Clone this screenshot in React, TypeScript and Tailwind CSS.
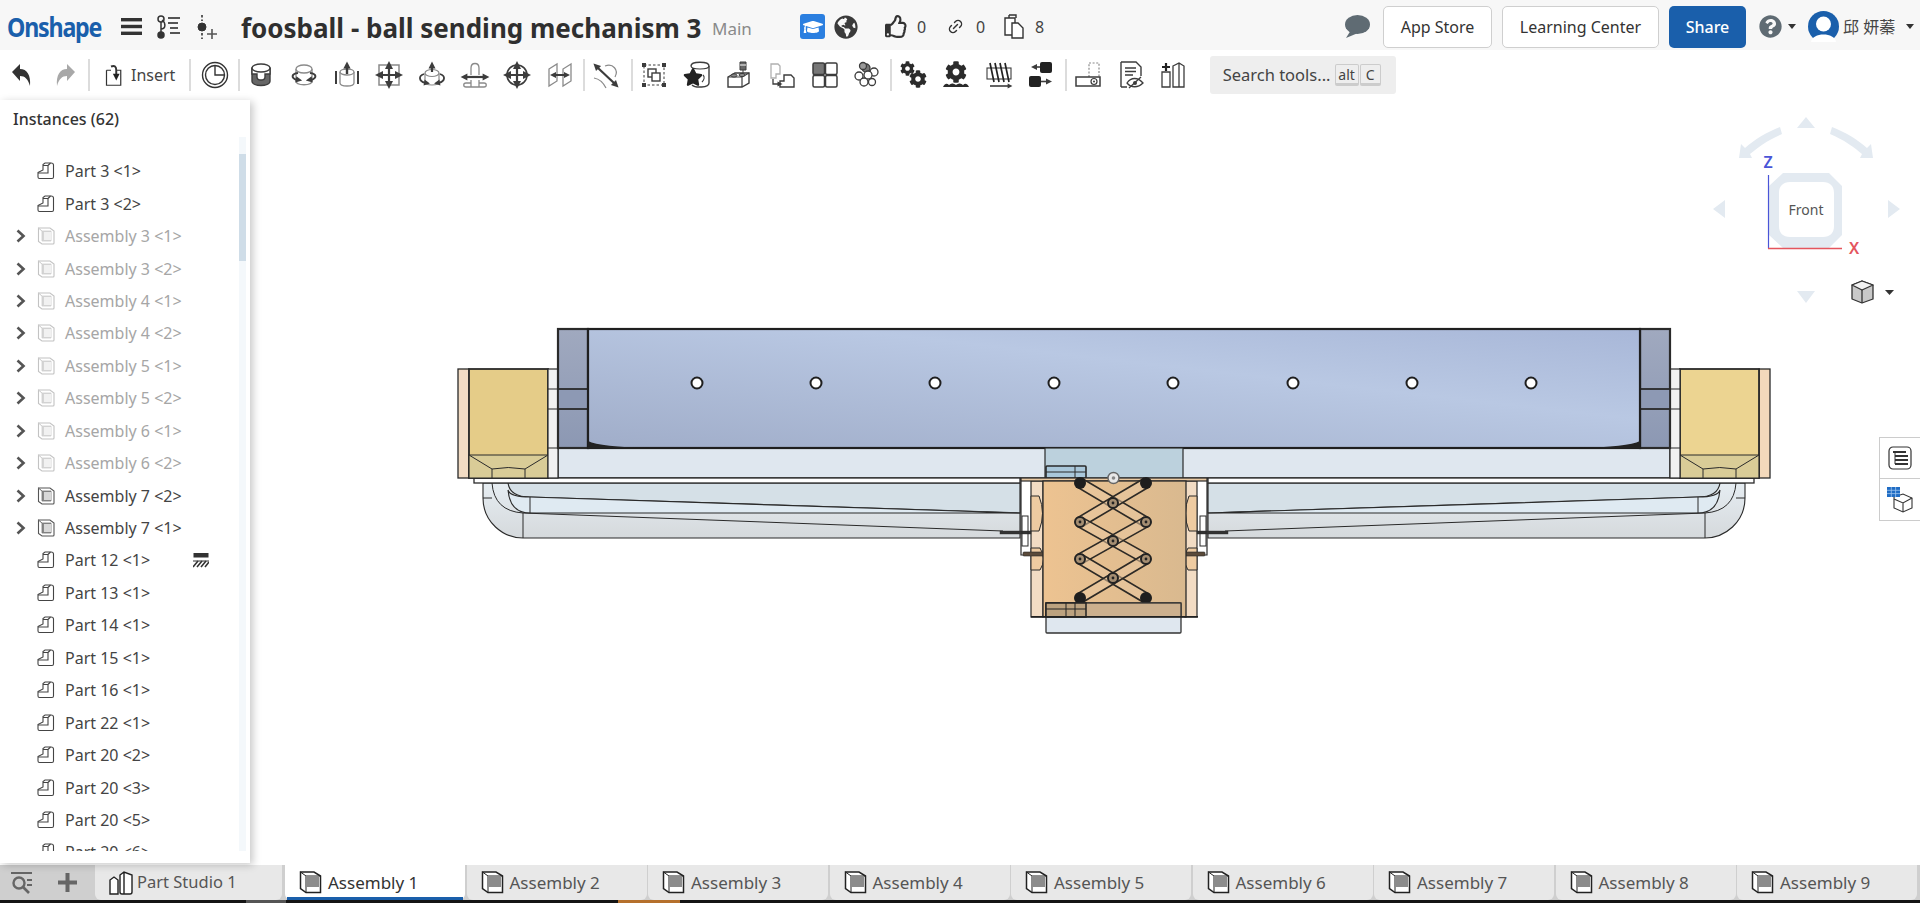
import React from 'react';
import { FaCog, FaGlobeAmericas, FaGraduationCap, FaQuestionCircle, FaRegThumbsUp, FaStar } from 'react-icons/fa';
import { Link2 } from 'lucide-react';

const FONT = "font-['Noto_Sans','Noto_Sans_CJK_TC',sans-serif]";
const INK = '#3c3c3c';
const MID = '#8a8a8a';

// small filled arrow, pointing to (x, y) along a direction in degrees (0 = right)
const Head = ({ x, y, a, s = 4, c = INK }: { x: number; y: number; a: number; s?: number; c?: string }) => (
  <path d={`M${s} 0 L${-s} ${-s} L${-s} ${s} Z`} fill={c} stroke="none" transform={`translate(${x} ${y}) rotate(${a})`} />
);

const Cylinder = ({ c = MID }: { c?: string }) => (
  <g stroke={c} strokeWidth="1.3" fill="white">
    <path d="M7 9 V21 C7 26 23 26 23 21 V9" />
    <ellipse cx="15" cy="9" rx="8" ry="4" />
  </g>
);

const Cross = () => (
  <g stroke={INK} strokeWidth="2.2">
    <path d="M15 6 V24 M6 15 H24" />
    <Head x={15} y={5} a={-90} />
    <Head x={15} y={25} a={90} />
    <Head x={5} y={15} a={180} />
    <Head x={25} y={15} a={0} />
  </g>
);

const toolIcons: Record<string, React.ReactNode> = {
  fasten: (
    <g stroke={INK} strokeWidth="1.4">
      <path d="M6 8 V21 C6 27 24 27 24 21 V8" fill="#666" />
      <path d="M6 8 V14 H11 V17 C11 21 19 21 19 17 V14 H24 V8 Z" fill="white" />
      <ellipse cx="15" cy="8" rx="9" ry="4" fill="white" />
    </g>
  ),
  revolute: (
    <g>
      <Cylinder />
      <g stroke={INK} strokeWidth="2" fill="none">
        <path d="M9 13 C2 14 2 18 8 20" />
        <path d="M21 13 C28 14 28 18 22 20" />
      </g>
      <Head x={10} y={20} a={10} s={3.2} />
      <Head x={20} y={20} a={170} s={3.2} />
    </g>
  ),
  slider: (
    <g>
      <g stroke={MID} strokeWidth="1.3" fill="white">
        <path d="M8 12 V23 C8 27 22 27 22 23 V12" />
        <ellipse cx="15" cy="12" rx="7" ry="3" />
      </g>
      <path d="M4 11 V24 M26 11 V24" stroke={INK} strokeWidth="2" />
      <path d="M15 14 V7" stroke={INK} strokeWidth="2.4" />
      <Head x={15} y={5} a={-90} s={3.6} />
    </g>
  ),
  planar: (
    <g>
      <rect x="5" y="5" width="20" height="20" fill="white" stroke={MID} strokeWidth="1.5" />
      <Cross />
    </g>
  ),
  cylindrical: (
    <g>
      <g stroke={MID} strokeWidth="1.2" fill="white">
        <path d="M8 13 V22 C8 26 22 26 22 22 V13" />
        <ellipse cx="15" cy="13" rx="7" ry="3.5" />
      </g>
      <path d="M15 12 V7" stroke={INK} strokeWidth="2.2" />
      <Head x={15} y={5} a={-90} s={3.5} />
      <g stroke={INK} strokeWidth="1.8" fill="none">
        <path d="M7 14 C1 16 2 21 8 23" />
        <path d="M23 14 C29 16 28 21 22 23" />
      </g>
      <Head x={10} y={23} a={10} s={3} />
      <Head x={20} y={23} a={170} s={3} />
    </g>
  ),
  pin: (
    <g>
      <path d="M11 15 V8 C11 2 19 2 19 8 V15 M11 20 V23 H6 C3 23 3 27 6 27 H24 C27 27 27 23 24 23 H19 V20 M11 27 V23 M19 27 V23" fill="white" stroke={MID} strokeWidth="1.3" />
      <path d="M6 17 H24" stroke={INK} strokeWidth="2.2" />
      <Head x={4} y={17} a={180} s={3.4} />
      <Head x={26} y={17} a={0} s={3.4} />
    </g>
  ),
  ball: (
    <g>
      <circle cx="15" cy="15" r="10" fill="white" stroke={INK} strokeWidth="1.6" />
      <Cross />
    </g>
  ),
  parallel: (
    <g>
      <path d="M4 9 L12 4 V21 L4 26 Z M26 4 L18 9 V26 L26 21 Z" fill="white" stroke={MID} strokeWidth="1.3" />
      <path d="M8 15 H22" stroke={INK} strokeWidth="2" />
      <Head x={8} y={15} a={180} s={3} />
      <Head x={22} y={15} a={0} s={3} />
    </g>
  ),
  tangent: (
    <g>
      <path d="M3 18 C9 19 13 24 15 28 M14 6 C22 3 28 10 24 17" fill="none" stroke={MID} strokeWidth="1.2" />
      <path d="M7 8 L23 23" stroke={INK} strokeWidth="2.2" />
      <Head x={5} y={6} a={-135} s={3.6} />
      <Head x={25} y={25} a={45} s={3.6} />
    </g>
  ),
  group: (
    <g>
      <rect x="5" y="5" width="20" height="20" fill="none" stroke={INK} strokeWidth="1" strokeDasharray="2.5 2" />
      <g fill={INK}>
        <rect x="3" y="3" width="4" height="4" />
        <rect x="23" y="3" width="4" height="4" />
        <rect x="3" y="23" width="4" height="4" />
        <rect x="23" y="23" width="4" height="4" />
      </g>
      <rect x="9" y="9" width="8" height="8" fill="white" stroke={INK} strokeWidth="1.4" />
      <rect x="13" y="13" width="8" height="8" fill="white" stroke={INK} strokeWidth="1.4" />
    </g>
  ),
  star: (
    <g>
      <path d="M9 6 C9 1 27 1 27 6 V23 C27 28 13 28 10 25" fill="white" stroke={INK} strokeWidth="1.4" />
      <path d="M9 6 C9 10 27 10 27 6" fill="none" stroke={INK} strokeWidth="1.2" />
      <FaStar x={1} y={7} size={20} color="#222" />
      <path d="M20 22 C22 20 23 17 21 15" stroke={INK} fill="none" strokeWidth="1.2" />
    </g>
  ),
  bolted: (
    <g>
      <path d="M4 17 L11 13 H25 V23 L18 27 H4 Z" fill="white" stroke={INK} strokeWidth="1.4" />
      <path d="M4 17 H18 V27 M18 17 L25 13" fill="none" stroke={INK} strokeWidth="1.2" />
      <ellipse cx="10" cy="15.5" rx="3" ry="1.6" fill="#888" stroke={INK} />
      <ellipse cx="18" cy="15" rx="3" ry="1.6" fill="#888" stroke={INK} />
      <path d="M16 2 H22 V10 H16 Z" fill="#666" stroke={INK} />
      <path d="M16 5 H22" stroke="white" />
      <path d="M19 10 V13" stroke={INK} />
    </g>
  ),
  parts: (
    <g fill="white">
      <path d="M4 4 H11 L13 6 V14 H9 V18 H4 Z" stroke="#b0b0b0" strokeWidth="1.3" />
      <path d="M17 15 H24 L27 18 V27 H13 V21 H17 Z" stroke={INK} strokeWidth="1.4" />
      <path d="M6 19 V24 H11" fill="none" stroke={INK} strokeWidth="1.3" />
      <Head x={13} y={24} a={0} s={2.5} />
    </g>
  ),
  pattern: (
    <g stroke={INK} strokeWidth="1.5">
      <rect x="3" y="3" width="11.5" height="11.5" rx="1.5" fill="#777" />
      <rect x="15.5" y="3" width="11.5" height="11.5" rx="1.5" fill="white" />
      <rect x="3" y="15.5" width="11.5" height="11.5" rx="1.5" fill="white" />
      <rect x="15.5" y="15.5" width="11.5" height="11.5" rx="1.5" fill="white" />
    </g>
  ),
  rings: (
    <g fill="white" stroke={INK} strokeWidth="1.3">
      <circle cx="14" cy="8" r="4" fill="#777" />
      <circle cx="11" cy="6" r="3.5" fill="#999" />
      <circle cx="22" cy="12" r="4" />
      <circle cx="16" cy="15" r="4" />
      <circle cx="7" cy="16" r="4" />
      <circle cx="12" cy="22" r="4" />
      <circle cx="20" cy="22" r="3.5" />
    </g>
  ),
  gears: (
    <g>
      <FaCog x={2} y={1} size={15} color="#2b2b2b" />
      <FaCog x={11} y={10} size={18} color="#2b2b2b" />
    </g>
  ),
  rack: (
    <g>
      <FaCog x={4} y={1} size={22} color="#2b2b2b" />
      <path d="M2 27 C4 23 6 23 8 25 C10 23 12 23 15 25 C18 23 20 23 22 25 C24 23 26 23 28 27 Z" fill="#2b2b2b" />
    </g>
  ),
  screw: (
    <g>
      <rect x="3" y="8" width="24" height="11" fill="white" stroke={INK} strokeWidth="1.1" />
      <path d="M6 3 L10 22 M11 3 L15 22 M16 3 L20 22 M21 3 L25 22" stroke="#222" strokeWidth="1.7" />
      <path d="M6 26 H24" stroke={INK} strokeWidth="1.6" />
      <Head x={26} y={26} a={0} s={2.4} />
    </g>
  ),
  linear: (
    <g>
      <rect x="14" y="2" width="12" height="11" rx="2" fill="#222" />
      <path d="M9 7 H14" stroke={INK} strokeWidth="1.6" />
      <Head x={8} y={7} a={180} s={3} />
      <rect x="3" y="16" width="12" height="11" rx="2" fill="#222" />
      <path d="M15 21.5 H21" stroke={INK} strokeWidth="1.6" />
      <Head x={23} y={21.5} a={0} s={3} />
    </g>
  ),
  limits: (
    <g>
      <rect x="16" y="3" width="10" height="15" fill="white" stroke={MID} strokeWidth="1.2" strokeDasharray="2 1.6" />
      <rect x="3" y="17" width="24" height="9" fill="white" stroke={INK} strokeWidth="1.5" />
      <circle cx="21" cy="21.5" r="3" fill="white" stroke={INK} strokeWidth="1.2" />
      <circle cx="21" cy="21.5" r="1" fill={INK} />
    </g>
  ),
  hide: (
    <g>
      <path d="M5 2 H20 L25 7 V16 M11 27 H5 Z M5 2 V27" fill="white" stroke={INK} strokeWidth="1.4" />
      <path d="M9 8 H20 M9 11.5 H20 M9 15 H17" stroke={INK} strokeWidth="1.5" />
      <path d="M11 23 C15 17 22 17 27 23 C22 28 15 28 11 23 Z" fill="white" stroke={INK} strokeWidth="1.3" />
      <circle cx="19" cy="23" r="2" fill={INK} />
      <path d="M13 28 L25 17" stroke={INK} strokeWidth="1.3" />
    </g>
  ),
  replicate: (
    <g fill="white">
      <path d="M4 12 H12 V27 H4 Z" stroke={INK} strokeWidth="1.3" />
      <path d="M15 6 L21 3 L26 6 V27 H15 Z M21 3 V27" stroke={INK} strokeWidth="1.3" />
      <path d="M8 3 V11 M4 7 H12" stroke="#222" strokeWidth="2.2" />
    </g>
  ),
};

const Tool = ({ name }: { name: string }) => (
  <div className="w-[42.7px] h-[50px] shrink-0 flex items-center justify-center">
    <svg width="30" height="30" viewBox="0 0 30 30" fill="none">
      {toolIcons[name]}
    </svg>
  </div>
);

const Divider = ({ className = '' }: { className?: string }) => <div className={`w-[2px] h-[32px] shrink-0 bg-[#dcdcdc] ${className}`} />;

const Caret = () => (
  <svg width="8" height="5" viewBox="0 0 8 5" className="shrink-0">
    <path d="M0 0 H8 L4 5 Z" fill="#333" />
  </svg>
);

const PartIcon = () => (
  <svg width="18" height="18" viewBox="0 0 18 18" fill="none" stroke="#444" strokeWidth="1.1" className="shrink-0">
    <path d="M1 10.5 L6 8 V2.5 L8 1 H14 Q16.5 1 16.5 3 V15 Q16.5 16.5 15 16.5 H2.5 Q1 16.5 1 15 Z" />
    <path d="M1 11 H11 V3.5 M6 3.5 H11 M11 3.5 L13.5 1" />
  </svg>
);

const AsmIcon = ({ dim }: { dim: boolean }) => (
  <svg width="18" height="18" viewBox="0 0 18 18" className="shrink-0" opacity={dim ? 0.35 : 1}>
    <path d="M1.5 1 H13 L17 4 V16 Q17 17 16 17 H5 L1.5 14.5 Z" fill="white" stroke="#555" strokeWidth="1.1" />
    <path d="M1.5 1 L5 4 H14 V14 H5 V4 Z" fill="#888" stroke="#777" strokeWidth="0.8" />
    <rect x="7" y="5" width="7" height="8" fill="#d8d8d8" />
  </svg>
);

type Row = { label: string; kind: 'part' | 'asm'; dim?: boolean };

const rows: Row[] = [
  { label: 'Part 3 <1>', kind: 'part' },
  { label: 'Part 3 <2>', kind: 'part' },
  { label: 'Assembly 3 <1>', kind: 'asm', dim: true },
  { label: 'Assembly 3 <2>', kind: 'asm', dim: true },
  { label: 'Assembly 4 <1>', kind: 'asm', dim: true },
  { label: 'Assembly 4 <2>', kind: 'asm', dim: true },
  { label: 'Assembly 5 <1>', kind: 'asm', dim: true },
  { label: 'Assembly 5 <2>', kind: 'asm', dim: true },
  { label: 'Assembly 6 <1>', kind: 'asm', dim: true },
  { label: 'Assembly 6 <2>', kind: 'asm', dim: true },
  { label: 'Assembly 7 <2>', kind: 'asm' },
  { label: 'Assembly 7 <1>', kind: 'asm' },
  { label: 'Part 12 <1>', kind: 'part' },
  { label: 'Part 13 <1>', kind: 'part' },
  { label: 'Part 14 <1>', kind: 'part' },
  { label: 'Part 15 <1>', kind: 'part' },
  { label: 'Part 16 <1>', kind: 'part' },
  { label: 'Part 22 <1>', kind: 'part' },
  { label: 'Part 20 <2>', kind: 'part' },
  { label: 'Part 20 <3>', kind: 'part' },
  { label: 'Part 20 <5>', kind: 'part' },
  { label: 'Part 20 <6>', kind: 'part' },
];

const Sidebar = () => (
  <aside className="w-[250px] h-[763px] shrink-0 bg-white shadow-[3px_2px_8px_rgba(0,0,0,0.22)] z-10 flex flex-col">
    <div className="h-[37px] pl-[13px] flex items-center text-[16px] font-medium text-[#333]">Instances (62)</div>
    <div className="h-[714px] flex overflow-hidden">
      <div className="w-[239px] pt-[18px] overflow-hidden">
        {rows.map((row) => (
          <div key={row.label} className="h-[32.45px] flex items-center relative">
            <div className="w-[37px] pl-[16px] shrink-0">
              {row.kind === 'asm' && (
                <svg width="10" height="14" viewBox="0 0 10 14" fill="none" stroke="#555" strokeWidth="2.6">
                  <path d="M1.5 1.5 L7.5 7 L1.5 12.5" />
                </svg>
              )}
            </div>
            {row.kind === 'part' ? <PartIcon /> : <AsmIcon dim={!!row.dim} />}
            <span className={`ml-[10px] text-[16px] whitespace-nowrap ${row.dim ? 'text-[#a6a6a6]' : 'text-[#444]'}`}>{row.label}</span>
            {row.label === 'Part 12 <1>' && (
              <svg width="16" height="15" viewBox="0 0 16 15" className="ml-auto mr-[30px]" stroke="#333">
                <rect x="0.5" y="0" width="15" height="4.5" fill="#333" stroke="none" />
                <path d="M0 14 L5 8 M4 14 L9 8 M8 14 L13 8 M12 14 L16 9" strokeWidth="1.6" />
                <path d="M0 8 H16" strokeWidth="1" />
              </svg>
            )}
          </div>
        ))}
      </div>
      <div className="w-[7px] h-full bg-[#f4f8fb]">
        <div className="mt-[17px] h-[107px] bg-[#cfdde8]" />
      </div>
    </div>
  </aside>
);

const Bar = ({ x1, y1, x2, y2 }: { x1: number; y1: number; x2: number; y2: number }) => {
  const len = Math.hypot(x2 - x1, y2 - y1);
  const nx = ((y2 - y1) / len) * 5;
  const ny = ((x1 - x2) / len) * 5;
  return (
    <path
      d={`M${x1 + nx} ${y1 + ny} L${x2 + nx} ${y2 + ny} L${x2 - nx} ${y2 - ny} L${x1 - nx} ${y1 - ny} Z`}
      fill="#e9c9a2"
      fillOpacity="0.55"
      stroke="#2d2a26"
      strokeWidth="1.6"
    />
  );
};

// left half of everything that is mirrored around x = 1114
const Half = ({ yellow, peach }: { yellow: string; peach: string }) => (
  <g stroke="#2a2a2a">
    <path d="M483 483 V498 C483 522 503 538 523 538 H1020 V483 Z" fill="url(#tube)" strokeWidth="1.1" />
    <path d="M492 483 Q494 511 523 513" fill="none" strokeWidth="1" />
    <path d="M508 483 Q510 497 530 497 L1020 513 V483 Z" fill="#d5e0e7" strokeWidth="1.2" />
    <path d="M508 490 Q510 513 530 513 H1020 L530 497 Q510 497 508 490 Z" fill="#dfeaf2" strokeWidth="1.1" />
    <path d="M523 513 L1003 531 M523 513 V538 M530 497 V513 M483 498 H492" fill="none" strokeWidth="1" />
    <rect x="474" y="478" width="546" height="5" fill="white" strokeWidth="1.3" />
    <rect x="458" y="369" width="11" height="109" fill={peach} strokeWidth="1.3" />
    <rect x="469" y="369" width="79" height="109" fill={yellow} strokeWidth="1.8" />
    <path d="M469 455 H548 V478 H469 Z" fill="#d9cc97" strokeWidth="1.2" />
    <path d="M469 455 L492 469 Q508 466 525 469 L548 455 M492 469 V478 M525 469 V478" fill="none" strokeWidth="1" />
    <rect x="548" y="369" width="10" height="109" fill="#f1f1f1" strokeWidth="1.2" />
    <path d="M548 389 H558 M548 409 H558 M548 448 H558" strokeWidth="1.2" />
    <rect x="558" y="329" width="30" height="119" fill="url(#wall)" strokeWidth="2.2" />
    <rect x="558" y="389" width="30" height="20" fill="#8d99b4" strokeWidth="1.8" />
    <path d="M1021 478 V555 H1031" fill="none" strokeWidth="1.2" />
    <rect x="1031" y="481" width="12" height="136" fill="#f2dcc4" strokeWidth="1.2" />
    <path d="M1031 496 H1039 Q1046 513 1039 531 H1031 Z M1031 548 H1040 Q1047 559 1040 570 H1031 Z" fill="#eecba1" strokeWidth="1" />
    <rect x="1023" y="552" width="42" height="4" rx="1" fill="#5a4a3a" strokeWidth="0.6" />
    <rect x="1000" y="531" width="31" height="3" fill="#333" strokeWidth="0.4" />
    <rect x="1022" y="516" width="6" height="30" fill="none" strokeWidth="1" />
  </g>
);

const Drawing = () => {
  const holes = [697, 816, 935, 1054, 1173, 1293, 1412, 1531];
  const xa = 1080;
  const xc = 1146;
  const bars = [
    [xa, 483, xc, 522],
    [xc, 483, xa, 522],
    [xa, 522, xc, 559],
    [xc, 522, xa, 559],
    [xa, 559, xc, 598],
    [xc, 559, xa, 598],
  ];
  return (
    <svg className="absolute inset-0" width="1670" height="765" viewBox="250 100 1670 765">
      <defs>
        <linearGradient id="blue" x1="0" y1="1" x2="1" y2="0">
          <stop offset="0" stopColor="#a0adc9" />
          <stop offset="0.62" stopColor="#b9c8e3" />
          <stop offset="1" stopColor="#a8b7d8" />
        </linearGradient>
        <linearGradient id="wall" x1="0" y1="0" x2="0" y2="1">
          <stop offset="0" stopColor="#a0a9bf" />
          <stop offset="1" stopColor="#8c98b3" />
        </linearGradient>
        <linearGradient id="tube" x1="0" y1="0" x2="0" y2="1">
          <stop offset="0" stopColor="#e6edf2" />
          <stop offset="1" stopColor="#d5d9dc" />
        </linearGradient>
        <linearGradient id="peach" x1="0" y1="0" x2="1" y2="0">
          <stop offset="0" stopColor="#edc391" />
          <stop offset="1" stopColor="#d9b98f" />
        </linearGradient>
      </defs>

      <rect x="558" y="448" width="1112" height="30" fill="#dfe7ef" stroke="#2a2a2a" strokeWidth="1.4" />
      <Half yellow="#e5cc88" peach="#f2dcc4" />
      <g transform="translate(2228 0) scale(-1 1)">
        <Half yellow="#ecd491" peach="#f3d9bb" />
      </g>
      <rect x="588" y="329" width="1052" height="119" fill="url(#blue)" stroke="#1f1f1f" strokeWidth="2.2" />
      <path d="M588 441 Q600 447 650 448 H588 Z M1640 441 Q1628 447 1578 448 H1640 Z" fill="#222" />
      {holes.map((x) => (
        <circle key={x} cx={x} cy="383" r="5.5" fill="white" stroke="#1f1f1f" strokeWidth="2" />
      ))}

      {/* centre block */}
      <rect x="1045" y="448" width="138" height="30" fill="#bcd1dd" stroke="#2a2a2a" strokeWidth="1.2" />
      <rect x="1046" y="466" width="40" height="12" rx="1" fill="#a9c7da" stroke="#2a2a2a" strokeWidth="1.6" />
      <path d="M1075 466 V478 M1046 472 H1086" stroke="#2a2a2a" fill="none" />
      <rect x="1021" y="478" width="186" height="3" fill="#e9c9a2" stroke="#2a2a2a" strokeWidth="1.2" />
      <rect x="1043" y="481" width="143" height="136" fill="url(#peach)" stroke="#2a2a2a" strokeWidth="1.3" />
      {bars.map(([x1, y1, x2, y2]) => (
        <Bar key={`${x1}-${y1}-${x2}`} x1={x1} y1={y1} x2={x2} y2={y2} />
      ))}
      {[[xa, 483], [xc, 483], [xa, 598], [xc, 598]].map(([x, y]) => (
        <circle key={`${x}-${y}`} cx={x} cy={y} r="6" fill="#1e1e1e" />
      ))}
      {[[xa, 522], [xc, 522], [xa, 559], [xc, 559], [1113, 503], [1113, 541], [1113, 578]].map(([x, y]) => (
        <g key={`${x}-${y}`}>
          <circle cx={x} cy={y} r="5" fill="#a58e72" stroke="#222" strokeWidth="2" />
          <circle cx={x} cy={y} r="1.4" fill="#222" />
        </g>
      ))}
      <circle cx="1113.5" cy="478" r="5.5" fill="#e8e8e8" stroke="#666" strokeWidth="1.4" />
      <circle cx="1113.5" cy="478" r="1.8" fill="#888" />
      <rect x="1046" y="603" width="135" height="30" rx="1" fill="#dfe7ef" stroke="#333" strokeWidth="1.3" />
      <rect x="1046" y="603" width="135" height="14" fill="#ccb08e" stroke="#333" strokeWidth="1.3" />
      <rect x="1046" y="603" width="40" height="14" fill="#bca27f" stroke="#222" strokeWidth="1.5" />
      <path d="M1066 603 V617 M1075 603 V617 M1046 609 H1086" stroke="#222" fill="none" />
      <rect x="1031" y="616" width="167" height="1.6" fill="#222" />

      {/* view cube */}
      <g fill="#e3eaf1" stroke="none">
        <path d="M1806 117 L1815 128 H1797 Z" />
        <path d="M1806 303 L1815 291 H1797 Z" />
        <path d="M1713 209 L1725 200 V218 Z" />
        <path d="M1900 209 L1888 200 V218 Z" />
        <path d="M1780 127 L1782 134 C1768 140 1758 147 1750 154 L1752 158 L1739 158 L1741 144 L1745 148 C1755 139 1767 132 1780 127 Z" />
        <path d="M1832 127 L1830 134 C1844 140 1854 147 1862 154 L1860 158 L1873 158 L1871 144 L1867 148 C1857 139 1845 132 1832 127 Z" />
        <path fillRule="evenodd" d="M1783 173 H1829 L1842 186 V235 L1829 248 H1783 L1769 235 V186 Z M1790 182 C1783 182 1779 186 1779 193 V226 C1779 233 1783 237 1790 237 H1823 C1830 237 1834 233 1834 226 V193 C1834 186 1830 182 1823 182 Z" />
      </g>
      <path d="M1768.5 175 V248.5" stroke="#4a55d8" strokeWidth="1.2" />
      <path d="M1768 248.5 H1842" stroke="#e4555d" strokeWidth="1.4" />
      <text x="1806" y="215" textAnchor="middle" fontSize="14" fill="#555">Front</text>
      <text x="1768" y="168" textAnchor="middle" fontSize="16" fontWeight="600" fill="#4a55d8">Z</text>
      <text x="1854" y="254" textAnchor="middle" fontSize="16" fontWeight="600" fill="#e4555d">X</text>
      <g stroke="#333" strokeWidth="1.3" strokeLinejoin="round">
        <path d="M1862 281 L1873 285 V299 L1862 303 L1852 299 V285 Z" fill="#c9c9c9" />
        <path d="M1852 285 L1862 290 L1873 285 L1862 281 Z" fill="#f2f2f2" />
        <path d="M1862 290 V303" fill="none" />
      </g>
      <path d="M1885 290 H1894 L1889.5 295 Z" fill="#333" />
    </svg>
  );
};

const tabs = ['Assembly 1', 'Assembly 2', 'Assembly 3', 'Assembly 4', 'Assembly 5', 'Assembly 6', 'Assembly 7', 'Assembly 8', 'Assembly 9'];

const TabAsmIcon = () => (
  <svg width="23" height="23" viewBox="0 0 23 23" className="shrink-0">
    <path d="M1.5 1 H15 L21.5 5 V21.5 H7 L1.5 17.5 Z" fill="white" stroke="#222" strokeWidth="1.5" />
    <path d="M1.5 1 L7 5 V21.5 M7 5 H21.5" fill="none" stroke="#222" strokeWidth="1" />
    <rect x="6" y="5" width="14" height="11" fill="#8c8c8c" />
  </svg>
);

export default function App() {
  return (
    <div className={`h-screen w-[1920px] flex flex-col overflow-hidden bg-white ${FONT}`}>
      <header className="h-[50px] shrink-0 bg-[#f7f7f7] pt-[3px] flex items-center text-[#444]">
        <div className="ml-[7px] w-[98px] text-[27px] leading-none font-bold tracking-[-1.4px] text-[#1a5fab] whitespace-nowrap origin-left scale-x-[0.86]">Onshape</div>
        <svg width="21" height="17" viewBox="0 0 21 17" className="ml-[16px] shrink-0" fill="#333">
          <rect width="21" height="3.4" />
          <rect y="6.8" width="21" height="3.4" />
          <rect y="13.6" width="21" height="3.4" />
        </svg>
        <svg width="23" height="24" viewBox="0 0 23 24" className="ml-[15px] shrink-0" fill="none" stroke="#333" strokeWidth="1.5">
          <circle cx="4" cy="4" r="3" />
          <circle cx="4" cy="20" r="3" fill="#333" />
          <path d="M4 7 V17 M4 14 C9 14 9 8 5 5" />
          <path d="M11 3 H23 M11 8 H21 M13 13 H21 M13 18 H23" strokeWidth="1.8" stroke="#555" />
        </svg>
        <svg width="20" height="26" viewBox="0 0 20 26" className="ml-[17px] shrink-0" fill="none" stroke="#333">
          <circle cx="5" cy="13" r="4" fill="#333" />
          <path d="M5 1 V7 M5 19 V25" strokeWidth="1.6" strokeDasharray="2.5 2" />
          <path d="M15 15 V25 M10 20 H20" strokeWidth="1.6" stroke="#555" />
        </svg>
        <div className="ml-[24px] mt-[2px] w-[460px] text-[26px] leading-none font-bold text-[#2f2f2f] whitespace-nowrap">foosball - ball sending mechanism 3</div>
        <div className="ml-[11px] mt-[4px] w-[42px] text-[17px] text-[#8a8a8a]">Main</div>
        <div className="ml-[46px] w-[25px] h-[25px] rounded-[3px] bg-[#2b7fe0] flex items-center justify-center shrink-0">
          <FaGraduationCap size={20} color="white" />
        </div>
        <FaGlobeAmericas size={24} color="#3a3a3a" className="ml-[9px] shrink-0" />
        <FaRegThumbsUp size={23} color="#333" className="ml-[27px] shrink-0" />
        <span className="ml-[9px] w-[9px] text-[16px]">0</span>
        <Link2 size={17} color="#333" strokeWidth={2} className="ml-[21px] shrink-0 -rotate-45" />
        <span className="ml-[12px] w-[9px] text-[16px]">0</span>
        <svg width="20" height="25" viewBox="0 0 20 25" className="ml-[19px] shrink-0" fill="white" stroke="#333" strokeWidth="1.4">
          <path d="M1 4 H11 V21 H1 Z" />
          <path d="M5 1 H12 V4 M5 4 V1" fill="none" />
          <path d="M8 9 H14 L19 14 V24 H8 Z" />
        </svg>
        <span className="ml-[11px] w-[9px] text-[16px]">8</span>

        <div className="ml-auto flex items-center pr-[6px]">
          <svg width="25" height="23" viewBox="0 0 25 23" className="shrink-0">
            <ellipse cx="12.5" cy="9.5" rx="12.5" ry="9.5" fill="#5f6b73" />
            <path d="M6 15 L1 23 L13 18 Z" fill="#5f6b73" />
          </svg>
          <div className="ml-[13px] w-[109px] h-[42px] border border-[#cfcfcf] rounded-[5px] bg-white flex items-center justify-center text-[16px] text-[#333]">App Store</div>
          <div className="ml-[10px] w-[157px] h-[42px] border border-[#cfcfcf] rounded-[5px] bg-white flex items-center justify-center text-[16px] text-[#333]">Learning Center</div>
          <div className="ml-[10px] w-[77px] h-[42px] rounded-[5px] bg-[#1a5fab] flex items-center justify-center text-[16px] font-medium text-white">Share</div>
          <FaQuestionCircle size={23} color="#5f6b73" className="ml-[13px] shrink-0" />
          <div className="ml-[6px]">
            <Caret />
          </div>
          <svg width="31" height="31" viewBox="0 0 31 31" className="ml-[12px] shrink-0">
            <circle cx="15.5" cy="15.5" r="15.5" fill="#1a5fab" />
            <circle cx="15.5" cy="13" r="7.5" fill="white" />
            <path d="M3 31 C4 21 27 21 28 31 Z" fill="white" />
          </svg>
          <span className="ml-[4px] w-[57px] text-[16px] text-[#444] whitespace-nowrap">邱 妍蓁</span>
          <div className="ml-[6px]">
            <Caret />
          </div>
        </div>
      </header>

      <div className="h-[50px] shrink-0 bg-white flex items-center text-[#444]">
        <div className="w-[43px] flex justify-center">
          <svg width="22" height="24" viewBox="0 0 22 24" fill="#333">
            <path d="M1 9 L9 1 V6 C16 6 20 12 19 23 C17 16 14 13 9 13 V18 Z" />
          </svg>
        </div>
        <div className="w-[44px] flex justify-center">
          <svg width="22" height="24" viewBox="0 0 22 24" fill="#a8a8a8">
            <path d="M21 9 L13 1 V6 C6 6 2 12 3 23 C5 16 8 13 13 13 V18 Z" />
          </svg>
        </div>
        <Divider className="ml-[1px]" />
        <div className="w-[99px] h-[50px] flex items-center">
          <svg width="18" height="23" viewBox="0 0 24 30" fill="none" stroke="#333" strokeWidth="1.6" className="ml-[15px]">
            <path d="M2 8 H8 M16 8 H21 V28 H2 V8" fill="white" />
            <path d="M8 3 C13 1 15 3 15 8 V14" strokeWidth="2.6" />
            <Head x={15} y={17} a={90} s={4.5} c="#222" />
          </svg>
          <span className="ml-[8px] text-[16px]">Insert</span>
        </div>
        <Divider />
        <div className="w-[47px] flex justify-center">
          <svg width="28" height="28" viewBox="0 0 28 28" fill="none" stroke="#333" strokeWidth="1.4">
            <circle cx="14" cy="14" r="12.5" />
            <circle cx="14" cy="14" r="9.5" />
            <path d="M14 5 V14 H23" />
          </svg>
        </div>
        <Divider />
        {['fasten', 'revolute', 'slider', 'planar', 'cylindrical', 'pin', 'ball', 'parallel'].map((n) => (
          <Tool key={n} name={n} />
        ))}
        <Divider className="ml-[1px]" />
        <Tool name="tangent" />
        <Divider className="ml-[3.5px]" />
        {['group', 'star', 'bolted', 'parts', 'pattern', 'rings'].map((n) => (
          <Tool key={n} name={n} />
        ))}
        <Divider className="ml-[1px]" />
        {['gears', 'rack', 'screw', 'linear'].map((n) => (
          <Tool key={n} name={n} />
        ))}
        <Divider className="ml-[2px]" />
        {['limits', 'hide', 'replicate'].map((n) => (
          <Tool key={n} name={n} />
        ))}
        <div className="ml-[15px] w-[186px] h-[38px] rounded-[3px] bg-[#eeeeee] flex items-center pl-[13px] text-[16.5px] text-[#444] whitespace-nowrap">
          <span className="w-[112px]">Search tools...</span>
          <div className="w-[24px] h-[22px] border border-[#ccc] border-b-[3px] rounded-[2px] flex items-center justify-center text-[14px]">alt</div>
          <div className="w-[21px] h-[22px] ml-[1px] border border-[#ccc] border-b-[3px] rounded-[2px] flex items-center justify-center text-[14px]">C</div>
        </div>
      </div>

      <main className="h-[765px] shrink-0 flex relative">
        <Sidebar />
        <div className="flex-1 relative">
          <Drawing />
        </div>
        <div className="absolute right-0 top-[337px] w-[41px] h-[84px] bg-white border border-r-0 border-[#cccccc] flex flex-col">
          <div className="h-[41px] border-b border-[#cccccc] flex items-center justify-center">
            <svg width="24" height="24" viewBox="0 0 24 24" fill="none" stroke="#333">
              <rect x="1" y="1" width="22" height="22" rx="4" strokeWidth="1.2" />
              <path d="M5 6 H18 M7 10 H20 M7 14 H20 M7 18 H20" strokeWidth="2" />
              <path d="M7 6 V18" strokeWidth="1" />
            </svg>
          </div>
          <div className="h-[41px] flex items-center justify-center">
            <svg width="26" height="26" viewBox="0 0 26 26" fill="none">
              <g stroke="#333" strokeWidth="1.1">
                <path d="M7 10 L16 7 L25 11 V21 L16 25 L7 21 Z" fill="white" />
                <path d="M7 12 L16 16 L25 11 M16 16 V25" />
              </g>
              <rect x="0" y="0" width="13" height="10" fill="#1f6cc4" />
              <path d="M0 3.3 H13 M0 6.6 H13 M4.3 0 V10 M8.6 0 V10" stroke="#9cc4ee" strokeWidth="0.8" />
            </svg>
          </div>
        </div>
      </main>

      <nav className="h-[35px] shrink-0 flex bg-[#cfcfcf] text-[17px] text-[#555]">
        <div className="w-[95px] shrink-0 flex items-center">
          <svg width="21" height="24" viewBox="0 0 21 24" fill="none" stroke="#666" className="ml-[11px]">
            <path d="M0 2 H21" strokeWidth="2" />
            <circle cx="8" cy="12" r="5.5" strokeWidth="2.4" />
            <path d="M12 16 L18 22" strokeWidth="2.6" />
            <path d="M16 9 H21 M16 14 H21" strokeWidth="2" />
          </svg>
          <svg width="19" height="19" viewBox="0 0 19 19" stroke="#666" strokeWidth="4" className="ml-[26px]">
            <path d="M9.5 0 V19 M0 9.5 H19" />
          </svg>
        </div>
        <div className="w-[187px] mr-[3px] shrink-0 bg-[#e8e8e8] rounded-b-[6px] flex items-center pl-[14px]">
          <svg width="25" height="24" viewBox="0 0 25 24" fill="white" stroke="#222" strokeWidth="1.4" className="shrink-0">
            <path d="M1 9 L5 6 L9 9 V23 H1 Z" />
            <path d="M11 4 L15 1 L23 4 V21 Q23 23 21 23 H13 Q11 23 11 21 Z M15 1 V23" />
          </svg>
          <span className="ml-[3px] text-[16.5px] whitespace-nowrap">Part Studio 1</span>
        </div>
        {tabs.map((t, i) => (
          <div key={t} className={`w-[180px] mr-[1.5px] shrink-0 rounded-b-[6px] flex items-center pl-[14px] relative ${i === 0 ? 'bg-white text-[#333]' : 'bg-[#e8e8e8]'}`}>
            <TabAsmIcon />
            <span className="ml-[6px] whitespace-nowrap">{t}</span>
            {i === 0 && <div className="absolute left-[2px] right-[2px] bottom-0 h-[3px] bg-[#1a5fab]" />}
          </div>
        ))}
      </nav>
      <div className="h-[3px] shrink-0 flex bg-[#141414]">
        <div className="ml-[246px] w-[40px] bg-[#555]" />
        <div className="ml-[332px] w-[62px] bg-[#b5702c]" />
      </div>
    </div>
  );
}
